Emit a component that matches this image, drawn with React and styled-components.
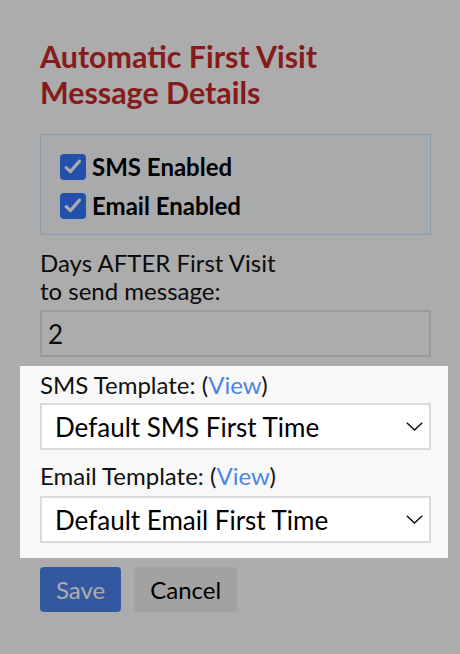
import styled, { createGlobalStyle } from "styled-components";

const GlobalStyle = createGlobalStyle`
  html, body {
    margin: 0;
    padding: 0;
    background: #ffffff;
    font-family: Lato, "Noto Sans", sans-serif;
    color: #111;
  }
`;

const Page = styled.div`
  position: relative;
  min-height: 654px;
  padding: 38px 29px 40px 40px;
  box-sizing: border-box;
`;

// dims everything except the spotlighted section
const Backdrop = styled.div`
  position: fixed;
  inset: 0;
  background: rgba(0, 0, 0, 0.325);
  z-index: 1;
`;

const Title = styled.h2`
  margin: 0 0 24px;
  font-size: 30.4px;
  line-height: 36px;
  font-weight: 700;
  color: #c82929;
`;

const CheckPanel = styled.div`
  display: flex;
  flex-direction: column;
  gap: 13px;
  padding: 19px 19px 15px;
  border: 1px solid #d2e7ff;
  background: #f9fdff;
`;

const CheckRow = styled.label`
  display: flex;
  align-items: center;
  gap: 6px;
  font-size: 24px;
  font-weight: 700;
  line-height: 26px;
  color: #000;
`;

const Box = styled.span`
  display: flex;
  width: 26px;
  height: 26px;
  border-radius: 4px;
  background: #3577fd;
  flex-shrink: 0;
`;

const FieldLabel = styled.div`
  font-size: 24px;
  line-height: 28px;
  color: #111;
  margin: ${(p) => p.$margin || "0 0 6px"};
`;

const TextInput = styled.div`
  height: 47px;
  box-sizing: border-box;
  border: 2px solid #e3e3e3;
  background: #fff;
  padding: 0 6px;
  display: flex;
  align-items: center;
  font-size: 26px;
`;

const Spotlight = styled.section`
  position: relative;
  z-index: 2;
  margin: 9px -17px 9px -20px;
  padding: 5px 17px 15px 20px;
  background: #f8f8f8;
`;

const ViewLink = styled.a`
  color: #4a86e8;
  text-decoration: none;
  cursor: pointer;
`;

const Select = styled.div`
  height: 47px;
  box-sizing: border-box;
  border: 2px solid #dadada;
  background: #fff;
  padding: 0 6px 0 13px;
  display: flex;
  align-items: center;
  justify-content: space-between;
  font-size: 26px;
  color: #000;
  margin-bottom: ${(p) => p.$gap || "0"};
`;

const Actions = styled.div`
  display: flex;
  gap: 13px;
`;

const Button = styled.button`
  height: 45px;
  padding: 0 16px;
  border: 0;
  border-radius: 4px;
  font-family: inherit;
  font-size: 24px;
  cursor: pointer;
  background: ${(p) => (p.$primary ? "#4d83ed" : "#f1f1f1")};
  color: ${(p) => (p.$primary ? "#fff" : "#000")};
`;

function Check() {
  return (
    <Box>
      <svg width="26" height="26" viewBox="0 0 26 26">
        <path
          d="M6.2 13.6 L10.4 17.6 L19.4 7.2"
          fill="none"
          stroke="#fff"
          strokeWidth="3.2"
          strokeLinecap="round"
          strokeLinejoin="round"
        />
      </svg>
    </Box>
  );
}

function Chevron() {
  return (
    <svg width="17" height="9" viewBox="0 0 17 9">
      <path d="M0.8 0.8 L8.5 8 L16.2 0.8" fill="none" stroke="#111" strokeWidth="1.5" />
    </svg>
  );
}

export default function App() {
  return (
    <>
      <GlobalStyle />
      <Page>
        <Backdrop />
        <Title>
          Automatic First Visit
          <br />
          Message Details
        </Title>
        <CheckPanel>
          <CheckRow>
            <Check /> SMS Enabled
          </CheckRow>
          <CheckRow>
            <Check /> Email Enabled
          </CheckRow>
        </CheckPanel>
        <FieldLabel $margin="14px 0 5px">
          Days AFTER First Visit
          <br />
          to send message:
        </FieldLabel>
        <TextInput>2</TextInput>
        <Spotlight>
          <FieldLabel $margin="0 0 4px">
            SMS Template: (<ViewLink>View</ViewLink>)
          </FieldLabel>
          <Select $gap="12px">
            <span>Default SMS First Time</span>
            <Chevron />
          </Select>
          <FieldLabel $margin="0 0 6px">
            Email Template: (<ViewLink>View</ViewLink>)
          </FieldLabel>
          <Select>
            <span>Default Email First Time</span>
            <Chevron />
          </Select>
        </Spotlight>
        <Actions>
          <Button $primary>Save</Button>
          <Button>Cancel</Button>
        </Actions>
      </Page>
    </>
  );
}
